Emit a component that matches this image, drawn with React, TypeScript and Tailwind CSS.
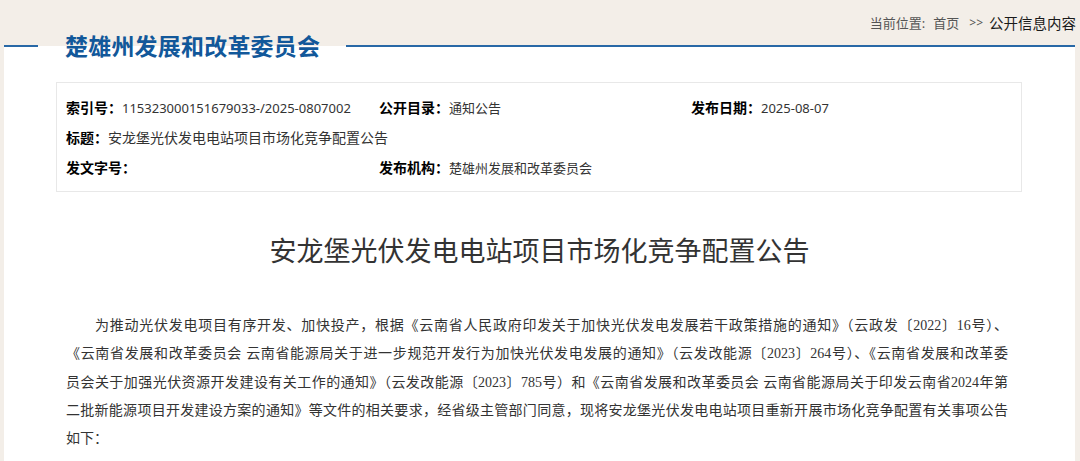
import React from "react";

const lines = [
  "为推动光伏发电项目有序开发、加快投产，根据《云南省人民政府印发关于加快光伏发电发展若干政策措施的通知》（云政发〔2022〕16号）、",
  "《云南省发展和改革委员会 云南省能源局关于进一步规范开发行为加快光伏发电发展的通知》（云发改能源〔2023〕264号）、《云南省发展和改革委",
  "员会关于加强光伏资源开发建设有关工作的通知》（云发改能源〔2023〕785号）和《云南省发展和改革委员会 云南省能源局关于印发云南省2024年第",
  "二批新能源项目开发建设方案的通知》等文件的相关要求，经省级主管部门同意，现将安龙堡光伏发电电站项目重新开展市场化竞争配置有关事项公告",
];

export default function App() {
  const sans = { fontFamily: '"Noto Sans", "Noto Sans CJK SC", sans-serif' };
  return (
    <div className="w-[1080px] h-[461px] overflow-hidden bg-[#f3eee8]" style={sans}>
      <div className="h-[45px] flex items-start justify-end pt-[13px] pr-[4px]">
        <div className="flex items-center text-[13px] text-[#555] leading-[20px]">
          <span>当前位置:</span>
          <span className="ml-[8px]">首页</span>
          <span className="ml-[10px] mr-[6px] text-[12px]">&gt;&gt;</span>
          <span className="text-[14.5px] text-[#1a1a1a]">公开信息内容</span>
        </div>
      </div>
      <div className="flow-root mx-[4px] mr-[5px] bg-white h-[416px] mt-[1px]">
        <div className="relative -mt-[12px] h-[24px] flex items-center">
          <div className="w-[34px] h-[2px] bg-[#2868a6]" />
          <div className="ml-[27px] mr-[26px] text-[23px] font-bold text-[#12589a] leading-[24px] tracking-[0.2px]">
            楚雄州发展和改革委员会
          </div>
          <div className="flex-1 h-[2px] bg-[#2868a6]" />
        </div>
        <div className="ml-[52px] w-[966px] mt-[24px] border border-[#e8e8e8] h-[110px] pl-[9px] pt-[13px]">
          <div className="grid grid-cols-[313px_312px_1fr] text-[13px] text-[#333] leading-[24px] gap-y-[6px]">
            <div className="whitespace-nowrap">
              <b className="text-[14px] text-black">索引号：</b>115323000151679033-/2025-0807002
            </div>
            <div className="whitespace-nowrap">
              <b className="text-[14px] text-black">公开目录：</b>通知公告
            </div>
            <div className="whitespace-nowrap">
              <b className="text-[14px] text-black">发布日期：</b>2025-08-07
            </div>
            <div className="col-span-3 whitespace-nowrap text-[14px]">
              <b className="text-[14px] text-black">标题：</b>安龙堡光伏发电电站项目市场化竞争配置公告
            </div>
            <div className="whitespace-nowrap">
              <b className="text-[14px] text-black">发文字号：</b>
            </div>
            <div className="col-span-2 whitespace-nowrap">
              <b className="text-[14px] text-black">发布机构：</b>楚雄州发展和改革委员会
            </div>
          </div>
        </div>
        <h1 className="mt-[40px] text-center text-[27px] text-[#333] leading-[38px] font-normal">
          安龙堡光伏发电电站项目市场化竞争配置公告
        </h1>
        <div
          className="mt-[42px] ml-[62px] w-[942px] text-[14px] leading-[28.3px] text-[#333]"
          style={{ fontFamily: '"Liberation Serif", "Noto Sans CJK SC", serif' }}
        >
          {lines.map((l, i) => (
            <div
              key={i}
              className={`text-justify [text-align-last:justify] whitespace-nowrap ${i === 0 ? "pl-[29px]" : ""}`}
            >
              {l}
            </div>
          ))}
          <div>如下：</div>
        </div>
      </div>
    </div>
  );
}
